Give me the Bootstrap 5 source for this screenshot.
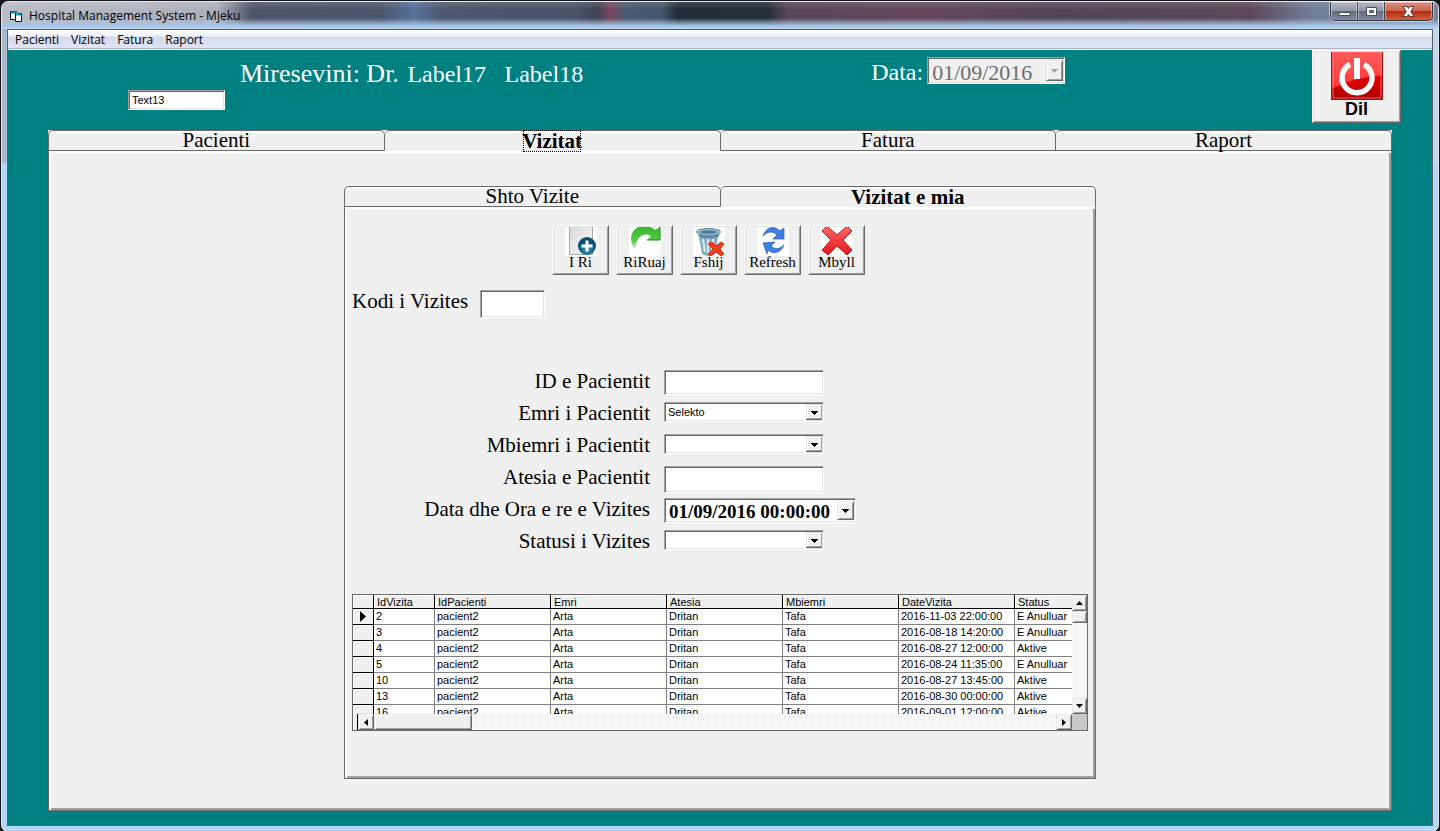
<!DOCTYPE html>
<html lang="sq">
<head>
<meta charset="utf-8">
<meta name="viewport" content="width=device-width, initial-scale=1">
<title>Hospital Management System - Mjeku</title>
<link href="https://cdn.jsdelivr.net/npm/bootstrap@5.3.0/dist/css/bootstrap.min.css" rel="stylesheet">
<style>
:root{--face:#f0f0f0;--dark:#696969;--shade:#a0a0a0;--lite:#e3e3e3}
body{background:#15161a;font-family:"Liberation Serif",serif;color:#000;padding:1px 1px 0}
button,input,select{border-radius:0;color:#000}
.win{border:1px solid #dfe9f4;border-radius:7px;padding:0 5px 5px;
  background:linear-gradient(180deg,transparent 0,transparent 160px,#b5d6fb 162px),linear-gradient(90deg,#a9b8ca,#c5d9ec)}
.titlebar{height:27px;margin:0 -5px;padding-left:7px;border-radius:6px 6px 0 0;
  background:linear-gradient(180deg,#ffffff22 0,transparent 8px,transparent 16px,#a9c7e6 24px,#b9d3ec),
  linear-gradient(90deg,#b9bdc6 0,#abb0bb 215px,#4d5468 250px,#4b566c 380px,#55719a 412px,#4d566e 440px,#4a5268 575px,#3a4253 595px,#7b4560 608px,#465a72 625px,#43566c 660px,#212c38 675px,#222d39 765px,#5a4457 785px,#64465b 920px,#544358 1060px,#5d4759 1250px,#6f7d99 1310px,#777e96)}
.titlebar>svg{margin-right:6px}
.ui-font{font-family:"Open Sans",sans-serif;font-size:12px;line-height:16px}
.winbtns{border:1px solid #2d3340;border-top:0;border-radius:0 0 5px 5px;overflow:hidden;height:19px;margin-right:5px;box-shadow:0 0 0 1px #ffffff88}
.winbtns button{border:0;border-right:1px solid #3a4050;padding:0;width:27px;height:19px;display:flex;align-items:center;justify-content:center;
  background:linear-gradient(180deg,#b4b8c4 0,#9298aa 45%,#646b80 50%,#8790a6);box-shadow:inset 0 0 0 1px #ffffff66}
.winbtns .x-btn{width:47px;border-right:0;background:linear-gradient(180deg,#dc9384 0,#cc6450 45%,#b02d13 50%,#d9663c)}
.client{border:1px solid #5a626c;background:#008080}
.menubar{height:20px;padding-left:7px;gap:12px;border-bottom:1px solid #f4f6fb;
  background:linear-gradient(180deg,#fff 0,#edf1f8 6px,#d4daed 7px,#e0e5f4 18px,#adb2c6 18px)}
.menubar a{color:#000;text-decoration:none}
.form-area{padding:0 40px 14px}
.hdr{height:80px;color:#fff;margin-right:-9px}
.sunk{background:#fff;border:1px solid;border-color:var(--shade) #fff #fff var(--shade);box-shadow:inset 1px 1px var(--dark),inset -1px -1px var(--lite);padding:0 3px;outline:0;display:block}
.tiny{font-family:"Liberation Sans",sans-serif;font-size:11px;line-height:13px}
.t13{width:97px;height:20px;margin:40px 15px 0 80px}
.hello{font-size:26px;line-height:30px;margin-top:9px;white-space:nowrap}
.hello span,.fs24{font-size:24px}
.hello span{margin-left:2px}
.hello span+span{margin-left:12px}
.g7{flex:7 0 0}.g6{flex:6 0 0}
.datebox{display:flex;padding:2px 1px 2px 2px}
.datebox input{border:0;background:transparent;padding:3px 2px 0;min-width:0;flex:1;outline:0}
#todaybox{width:138px;height:27px;margin-top:7px;background:var(--face)}
#todaybox input{font-size:22px;color:#6d6d6d}
.arrow-btn{width:17px;padding:0;border:1px solid;border-color:var(--lite) var(--dark) var(--dark) var(--lite);background:var(--face);box-shadow:inset 1px 1px #fff,inset -1px -1px var(--shade);display:flex;align-items:center;justify-content:center}
.raised{background:var(--face);border:1px solid;border-color:#fff var(--dark) var(--dark) #fff;box-shadow:inset 1px 1px var(--lite),inset -1px -1px var(--shade);padding:0;display:flex;flex-direction:column;align-items:center}
.dil{width:89px;height:73px;font:bold 18px/18px "Liberation Sans",sans-serif}
.tabs{display:flex;background:var(--face)}
.tabs button{flex:1 1 0;height:21px;padding:0 0 2px;background:var(--face);border:1px solid var(--dark);border-left-width:0;border-radius:5px 5px 0 0;box-shadow:inset 0 2px #fff;font-size:21px;line-height:18px}
.tabs button:first-child{border-left-width:1px}
.tabs .on{border-bottom-color:transparent;font-weight:bold;line-height:20px}
.tabs .on span{outline:1px dotted #000;outline-offset:-2px}
.page{background:var(--face);border:1px solid var(--dark);border-top:0;box-shadow:inset 2px 2px #fff,inset -2px -2px var(--shade)}
.outer{padding:35px 0 31px}
.inner{width:752px;max-width:100%;margin:0 auto}
.inner .page{padding:18px 7px 47px}
.tools{gap:7px;justify-content:center;padding-right:23px}
.tools .raised{width:57px;height:50px;font-size:15px;line-height:13px}
.tools svg,.dil svg{margin-top:1px;flex:none}
.code-row{margin-top:15px}
#kodi{width:65px;height:28px;margin-left:12px}
.lbl{font-size:21px;line-height:22px;white-space:nowrap}
.fields{display:grid;grid-template-columns:298px 192px;column-gap:14px;grid-auto-rows:32px;align-items:start;margin-top:52px;margin-bottom:32px}
.fields .lbl{text-align:right}
.w160{width:160px}
.h25{height:25px}.h27{height:27px}
.pick{appearance:none;height:20px;background:#fff url("data:image/svg+xml,%3Csvg xmlns='http://www.w3.org/2000/svg' width='17' height='16' shape-rendering='crispEdges'%3E%3Cpath fill='%23696969' d='M0 0h17v16H0z'/%3E%3Cpath fill='%23e3e3e3' d='M0 0h16v15H0z'/%3E%3Cpath fill='%23a0a0a0' d='M1 1h15v14H1z'/%3E%3Cpath fill='%23fff' d='M1 1h14v13H1z'/%3E%3Cpath fill='%23f0f0f0' d='M2 2h13v12H2z'/%3E%3Cpath d='M5 7h7v1H5zM6 8h5v1H6zM7 9h3v1H7zM8 10h1v1H8z'/%3E%3C/svg%3E") no-repeat right 0 top 1px}
.dt{font-size:19px;font-weight:bold}
.gridbox{border:1px solid var(--dark);display:grid;grid-template-columns:minmax(0,1fr) 15px;grid-template-rows:119px 16px;background:#fff}
.clip{overflow:hidden}
.visits{width:100%;table-layout:fixed;border-collapse:separate;border-spacing:0;white-space:nowrap}
.visits th,.visits td{height:16px;padding:0 0 1px 2px;border-right:1px solid #808080;border-bottom:1px solid #808080;line-height:14px;overflow:hidden;font-weight:normal}
.visits thead th{height:14px;line-height:12px;padding:1px 0 0 3px;border-color:#000;background:var(--face);box-shadow:inset 1px 1px #fff}
.visits tbody th{border-color:#000;background:var(--face);box-shadow:inset 1px 1px #fff;padding:0 0 0 7px}
.visits tr>:last-child{border-right:0}
.visits tbody th svg{display:block}
.c0{width:21px}.c1{width:61px}.c2{width:116px}
.track{background:repeating-conic-gradient(#f0f0f0 0 25%,#fff 0 50%) 0 0/2px 2px;display:flex}
.track .arrow-btn{flex:none}
.vs{flex-direction:column}.vs .arrow-btn{width:15px;height:16px}
.hs .arrow-btn{width:16px;height:16px}
.hs:before{content:"";width:5px;background:var(--face);border-right:1px solid #000}
.thumb{background:var(--face);border:1px solid;border-color:var(--lite) var(--dark) var(--dark) var(--lite);box-shadow:inset 1px 1px #fff,inset -1px -1px var(--shade)}
.vthumb{height:12px}.hthumb{width:98px}
.corner{background:#c8c8c8}
</style>
</head>
<body>
<div class="win">
  <header class="titlebar d-flex align-items-center ui-font">
    <svg width="14" height="14" viewBox="0 0 14 14"><path d="M1.500 2.500h6l1 2h4v8h-6v-2h-5z" fill="#fff" stroke="#111"/><path d="M2 3.500h5M7 5.500h5" stroke="#00a5b5" stroke-width="2"/><path d="M6.500 4v7" stroke="#111"/></svg>
    <span>Hospital Management System - Mjeku</span>
    <div class="winbtns d-flex ms-auto align-self-start">
      <button aria-label="Minimize"><svg width="13" height="10"><path d="M1 5.500h11v3H1z" fill="#fff" stroke="#484e5e"/></svg></button>
      <button aria-label="Maximize"><svg width="13" height="11"><path d="M1.500 1.500h10v8h-10z" fill="#fff" stroke="#484e5e"/><path d="M4.500 4.500h4v2h-4z" fill="#8990a3" stroke="#484e5e"/></svg></button>
      <button class="x-btn" aria-label="Close"><svg width="13" height="11" viewBox="0 0 13 11"><path d="M1 .5h4l1.500 2 1.500-2h4L8.700 5.500l3.300 5H8l-1.500-2-1.500 2H1l3.300-5z" fill="#fff" stroke="#5b3b40"/></svg></button>
    </div>
  </header>
  <div class="client">
    <nav class="menubar d-flex align-items-center ui-font">
      <a href="#">Pacienti</a><a href="#">Vizitat</a><a href="#">Fatura</a><a href="#">Raport</a>
    </nav>
    <main class="form-area">
      <div class="hdr d-flex align-items-start">
        <input class="sunk tiny t13" value="Text13" aria-label="Text13">
        <div class="hello">Miresevini: Dr. <span>Label17</span> <span>Label18</span></div>
        <div class="g7"></div>
        <label class="fs24 mt-1 me-1" for="today">Data:</label>
        <div class="sunk datebox" id="todaybox"><input id="today" value="01/09/2016" disabled><button class="arrow-btn" disabled aria-label="Hap kalendarin"><svg width="7" height="4"><path d="M0 0h7L3.500 4z" fill="#a0a0a0"/></svg></button></div>
        <div class="g6"></div>
        <button class="raised dil"><svg width="52" height="48" viewBox="0 0 52 48"><defs><linearGradient id="rd" x2="0" y2="1"><stop offset="0" stop-color="#ff5c5c"/><stop offset="1" stop-color="#ff2a2a"/></linearGradient><linearGradient id="rd2" x2="0" y2="1"><stop offset="0" stop-color="#f00000"/><stop offset="1" stop-color="#a80000"/></linearGradient></defs><path d="M0 0h52v48H0z" fill="url(#rd)"/><path d="M0 37Q24 25 52 23v25H0z" fill="url(#rd2)"/><path d="M.5 0v47.500h51V0" fill="none" stroke="#a01010"/><path d="M2 0v46h48V0" fill="none" stroke="#ff8a8a" stroke-opacity=".7"/><path d="M19 12.500a15 15 0 1 0 14 0" fill="none" stroke="#fff" stroke-width="5.500"/><path d="M26 6v21" stroke="#fff" stroke-width="6"/></svg>Dil</button>
      </div>
      <div class="tabs" role="tablist">
        <button role="tab">Pacienti</button><button role="tab" class="on" aria-selected="true"><span>Vizitat</span></button><button role="tab">Fatura</button><button role="tab">Raport</button>
      </div>
      <section class="page outer">
        <div class="inner">
          <div class="tabs" role="tablist">
            <button role="tab">Shto Vizite</button><button role="tab" class="on" aria-selected="true">Vizitat e mia</button>
          </div>
          <div class="page">
            <div class="tools d-flex">
              <button class="raised"><svg width="32" height="29"><defs><linearGradient id="pg" x2="1" y2="1"><stop stop-color="#d8d8d8"/><stop offset="1" stop-color="#fafafa"/></linearGradient><radialGradient id="bl" cy=".7"><stop stop-color="#2da0c4"/><stop offset="1" stop-color="#0a4c70"/></radialGradient></defs><path d="M0 0h32v29H0z" fill="#fff"/><path d="M4.500-1v28.500h23V-1" fill="url(#pg)" stroke="#aaa"/><circle cx="22" cy="19" r="9" fill="url(#bl)"/><path d="M22 13.500v11M16.500 19h11" stroke="#fff" stroke-width="3"/></svg>I Ri</button>
              <button class="raised"><svg width="32" height="29"><defs><linearGradient id="gr" x2="0" y2="1"><stop stop-color="#35b52b"/><stop offset=".6" stop-color="#55cc48"/><stop offset="1" stop-color="#fff"/></linearGradient></defs><path d="M0 0h32v29H0z" fill="#fff"/><path d="M7 24C-2 13 2 0 14-1c6 0 9 1 12 4l5-3v13H18l4-4c-7-5-17 2-15 15z" fill="url(#gr)"/><path d="M31 0v13H18" fill="none" stroke="#138a16"/></svg>RiRuaj</button>
              <button class="raised"><svg width="32" height="29"><path d="M0 0h32v29H0z" fill="#fff"/><path d="M5 5l4 22q7 4 13 0l4-22z" fill="#86adc4"/><path d="M10 12l2 13M15 12v14M20 12l-1 13" stroke="#dceaf2" stroke-width="2"/><path d="M6 8q10 5 20 0" fill="none" stroke="#5b8aa6" stroke-width="2"/><ellipse cx="15.500" cy="5" rx="12" ry="3.500" fill="#9fc2d6" stroke="#5985a1"/><ellipse cx="15.500" cy="5" rx="8.500" ry="1.700" fill="#4d7b98"/><path d="M15 17l4-2 4 4 5-4 3 2-4 5 4 5-3 2-5-4-5 4-3-2 5-5z" fill="#f0401f" stroke="#d42b10"/></svg>Fshij</button>
              <button class="raised"><svg width="32" height="29"><path d="M0 0h32v29H0z" fill="#fff"/><g fill="#3f7fe6" stroke="#2459b8" stroke-width=".7"><path d="M6 9C9 0 17-2 23 4l4-3v11H16l4-4C16 4 11 4 6 9z"/><path d="M27 18c-3 8-11 10-16 5l-1 4-4-11 12-1-4 4c4 4 9 3 13-1z"/></g></svg>Refresh</button>
              <button class="raised"><svg width="32" height="29"><defs><linearGradient id="xx" x2="0" y2="1"><stop stop-color="#ff6b66"/><stop offset="1" stop-color="#e3141a"/></linearGradient></defs><path d="M0 0h32v29H0z" fill="#fff"/><path d="M1 4l5-5 10 9 10-9 5 5-9 9 9 10-5 5-10-9-9 9-6-5 9-10z" fill="url(#xx)" stroke="#b8141a"/></svg>Mbyll</button>
            </div>
            <div class="d-flex align-items-start code-row">
              <label class="lbl" for="kodi">Kodi i Vizites</label><input class="sunk" id="kodi">
            </div>
            <div class="fields">
              <label class="lbl" for="f1">ID e Pacientit</label><input class="sunk w160 h25" id="f1">
              <label class="lbl" for="f2">Emri i Pacientit</label><select class="sunk pick tiny w160" id="f2"><option>Selekto</option></select>
              <label class="lbl" for="f3">Mbiemri i Pacientit</label><select class="sunk pick tiny w160" id="f3"><option></option></select>
              <label class="lbl" for="f4">Atesia e Pacientit</label><input class="sunk w160 h27" id="f4">
              <label class="lbl" for="f5">Data dhe Ora e re e Vizites</label><div class="sunk datebox h25"><input class="dt" id="f5" value="01/09/2016 00:00:00"><button class="arrow-btn" aria-label="Hap kalendarin"><svg width="7" height="4" shape-rendering="crispEdges"><path d="M0 0h7v1H0zM1 1h5v1H1zM2 2h3v1H2zM3 3h1v1H3z"/></svg></button></div>
              <label class="lbl" for="f6">Statusi i Vizites</label><select class="sunk pick tiny w160" id="f6"><option></option></select>
            </div>
            <div class="gridbox">
              <div class="clip">
                <table class="visits tiny">
                  <colgroup><col class="c0"><col class="c1"><col class="c2"><col class="c2"><col class="c2"><col class="c2"><col class="c2"><col></colgroup>
                  <thead><tr><th></th><th>IdVizita</th><th>IdPacienti</th><th>Emri</th><th>Atesia</th><th>Mbiemri</th><th>DateVizita</th><th>Status</th></tr></thead>
                  <tbody>
                    <tr><th><svg width="6" height="11"><path d="M0 0l6 5.500L0 11z"/></svg></th><td>2</td><td>pacient2</td><td>Arta</td><td>Dritan</td><td>Tafa</td><td>2016-11-03 22:00:00</td><td>E Anulluar</td></tr>
                    <tr><th></th><td>3</td><td>pacient2</td><td>Arta</td><td>Dritan</td><td>Tafa</td><td>2016-08-18 14:20:00</td><td>E Anulluar</td></tr>
                    <tr><th></th><td>4</td><td>pacient2</td><td>Arta</td><td>Dritan</td><td>Tafa</td><td>2016-08-27 12:00:00</td><td>Aktive</td></tr>
                    <tr><th></th><td>5</td><td>pacient2</td><td>Arta</td><td>Dritan</td><td>Tafa</td><td>2016-08-24 11:35:00</td><td>E Anulluar</td></tr>
                    <tr><th></th><td>10</td><td>pacient2</td><td>Arta</td><td>Dritan</td><td>Tafa</td><td>2016-08-27 13:45:00</td><td>Aktive</td></tr>
                    <tr><th></th><td>13</td><td>pacient2</td><td>Arta</td><td>Dritan</td><td>Tafa</td><td>2016-08-30 00:00:00</td><td>Aktive</td></tr>
                    <tr><th></th><td>16</td><td>pacient2</td><td>Arta</td><td>Dritan</td><td>Tafa</td><td>2016-09-01 12:00:00</td><td>Aktive</td></tr>
                  </tbody>
                </table>
              </div>
              <div class="track vs">
                <button class="arrow-btn" aria-label="Lart"><svg width="7" height="4"><path d="M0 4h7L3.500 0z"/></svg></button>
                <div class="thumb vthumb"></div>
                <button class="arrow-btn mt-auto" aria-label="Poshte"><svg width="7" height="4"><path d="M0 0h7L3.500 4z"/></svg></button>
              </div>
              <div class="track hs">
                <button class="arrow-btn" aria-label="Majtas"><svg width="4" height="7"><path d="M4 0v7L0 3.500z"/></svg></button>
                <div class="thumb hthumb"></div>
                <button class="arrow-btn ms-auto" aria-label="Djathtas"><svg width="4" height="7"><path d="M0 0v7l4-3.500z"/></svg></button>
              </div>
              <div class="corner"></div>
            </div>
          </div>
        </div>
      </section>
    </main>
  </div>
</div>
<script src="https://cdn.jsdelivr.net/npm/bootstrap@5.3.0/dist/js/bootstrap.bundle.min.js"></script>
</body>
</html>
